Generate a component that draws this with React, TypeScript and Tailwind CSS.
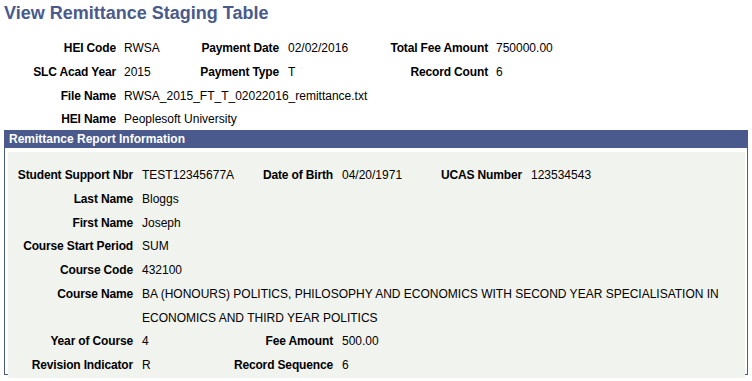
const headerRows = [
  { l1: 'HEI Code', v1: 'RWSA', l2: 'Payment Date', v2: '02/02/2016', l3: 'Total Fee Amount', v3: '750000.00' },
  { l1: 'SLC Acad Year', v1: '2015', l2: 'Payment Type', v2: 'T', l3: 'Record Count', v3: '6' },
];

function Label({ children, className = '' }: { children?: React.ReactNode; className?: string }) {
  return (
    <div className={`flex justify-end whitespace-nowrap font-bold tracking-[-0.15px] text-black ${className}`}>
      {children}
    </div>
  );
}

function Value({ children, className = '' }: { children?: React.ReactNode; className?: string }) {
  return <div className={`whitespace-nowrap text-black ${className}`}>{children}</div>;
}

export default function App() {
  return (
    <div
      className="w-[752px] h-[381px] bg-white text-[12px] overflow-hidden"
      style={{ fontFamily: 'Arial, "Liberation Sans", sans-serif' }}
    >
      {/* Page title */}
      <h1 className="pl-[4px] pt-[2px] text-[18px] leading-[22px] font-bold text-[#4a5a8c]">
        View Remittance Staging Table
      </h1>

      {/* Header fields */}
      <div className="mt-[13px] mb-[-2px] grid grid-cols-[116px_83px_80px_101px_108px_1fr] leading-[23.75px]">
        {headerRows.map((r) => (
          <div key={r.l1} className="contents">
            <Label>{r.l1}</Label>
            <Value className="pl-[8px]">{r.v1}</Value>
            <Label>{r.l2}</Label>
            <Value className="pl-[9px]">{r.v2}</Value>
            <Label>{r.l3}</Label>
            <Value className="pl-[8px]">{r.v3}</Value>
          </div>
        ))}
        <Label>File Name</Label>
        <Value className="col-span-5 pl-[8px]">RWSA_2015_FT_T_02022016_remittance.txt</Value>
        <Label>HEI Name</Label>
        <Value className="col-span-5 pl-[8px]">Peoplesoft University</Value>
      </div>

      {/* Remittance Report Information */}
      <div className="mx-[4px] w-[744px] border border-[#4a5a8c]">
        <div className="bg-[#4a5a8c] pl-[4px] leading-[18px] font-bold text-white -mt-px">
          Remittance Report Information
        </div>
        <div className="p-[3px] pt-[4px] pr-[2px]">
          <div className="bg-[#f1f3ee] pt-[12px]">
            <div className="mb-[-7px] grid grid-cols-[125px_99px_101px_97px_92px_1fr] leading-[23.75px]">
              <Label>Student Support Nbr</Label>
              <Value className="pl-[9px]">TEST12345677A</Value>
              <Label>Date of Birth</Label>
              <Value className="pl-[9px]">04/20/1971</Value>
              <Label>UCAS Number</Label>
              <Value className="pl-[9px]">123534543</Value>

              <Label>Last Name</Label>
              <Value className="col-span-5 pl-[9px]">Bloggs</Value>

              <Label>First Name</Label>
              <Value className="col-span-5 pl-[9px]">Joseph</Value>

              <Label>Course Start Period</Label>
              <Value className="col-span-5 pl-[9px]">SUM</Value>

              <Label>Course Code</Label>
              <Value className="col-span-5 pl-[9px]">432100</Value>

              <Label>Course Name</Label>
              <div className="col-span-5 pl-[9px] pr-[8px] text-black">
                BA (HONOURS) POLITICS, PHILOSOPHY AND ECONOMICS WITH SECOND YEAR SPECIALISATION IN ECONOMICS AND THIRD YEAR POLITICS
              </div>

              <Label>Year of Course</Label>
              <Value className="pl-[9px]">4</Value>
              <Label>Fee Amount</Label>
              <Value className="col-span-3 pl-[9px]">500.00</Value>

              <Label>Revision Indicator</Label>
              <Value className="pl-[9px]">R</Value>
              <Label>Record Sequence</Label>
              <Value className="col-span-3 pl-[9px]">6</Value>
            </div>
          </div>
        </div>
      </div>
    </div>
  );
}
